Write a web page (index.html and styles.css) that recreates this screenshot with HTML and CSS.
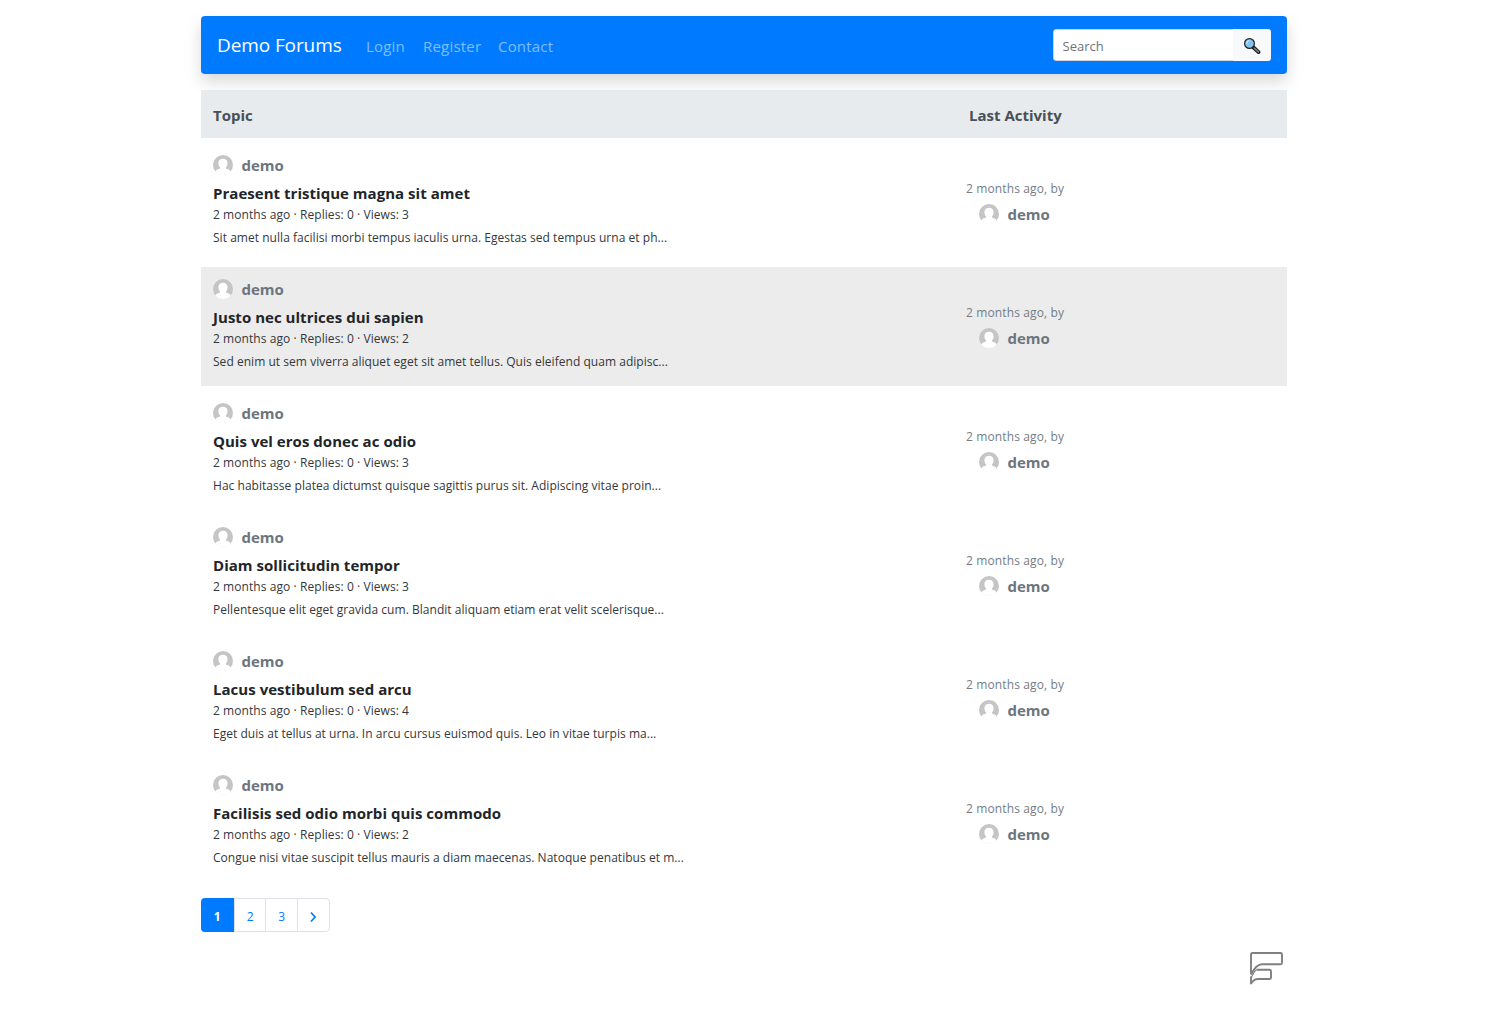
FILE: index.html
```
<!DOCTYPE html>
<html lang="en">
<head>
	<title>Demo Forums</title>
	<meta charset="UTF-8">
	<meta name="viewport" content="width=device-width, initial-scale=1.0">
	<link rel="stylesheet" href="styles.css">
</head>
<body>
	<svg class="defs" width="0" height="0">
		<symbol id="avatar" viewBox="0 0 20 20">
			<circle cx="10" cy="10" r="10" fill="#c5c5c5"/>
			<path d="M10 3.800c-3 0-4.600 1.900-4.600 4.500 0 1.900.8 3.400 1.700 4.300v.9c-2 .6-3.800 1.200-4.800 2.900A10 10 0 0 0 10 20a10 10 0 0 0 7.700-3.600c-1-1.700-2.800-2.300-4.800-2.900v-.9c.9-.9 1.700-2.400 1.700-4.300 0-2.600-1.600-4.500-4.600-4.500z" fill="#fff"/>
		</symbol>
	</svg>

	<div class="container">
		<nav class="navbar">
			<a class="brand" href="#">Demo Forums</a>
			<a class="nav-link login" href="#">Login</a>
			<a class="nav-link register" href="#">Register</a>
			<a class="nav-link contact" href="#">Contact</a>
			<form class="search">
				<input type="text" placeholder="Search">
				<button type="button" aria-label="Search">
					<svg width="18" height="18" viewBox="0 0 18 18">
						<path d="M10.500 10.500l5 4.600" stroke="#202020" stroke-width="3.800" stroke-linecap="round"/>
						<path d="M11.500 11.400l3.800 3.500" stroke="#788083" stroke-width="1.600" stroke-linecap="round"/>
						<circle cx="6.500" cy="6.500" r="4.900" fill="#83c3f0" stroke="#202020" stroke-width="1.200"/>
						<path d="M3.700 6.700a3 3 0 0 1 3-3" fill="none" stroke="#c4e4fa" stroke-width="1.300"/>
					</svg>
				</button>
			</form>
		</nav>

		<div class="thead">
			<div class="col-topic">Topic</div>
			<div class="col-last">Last Activity</div>
		</div>

		<div class="row">
			<div class="topic">
				<div class="user"><svg class="avatar"><use href="#avatar"/></svg>demo</div>
				<a class="title" href="#">Praesent tristique magna sit amet</a>
				<div class="meta">2 months ago · Replies: 0 · Views: 3</div>
				<p class="excerpt">Sit amet nulla facilisi morbi tempus iaculis urna. Egestas sed tempus urna et ph...</p>
			</div>
			<div class="last">
				<div class="ago">2 months ago, by</div>
				<div class="user"><svg class="avatar"><use href="#avatar"/></svg>demo</div>
			</div>
		</div>
		<div class="row active">
			<div class="topic">
				<div class="user"><svg class="avatar"><use href="#avatar"/></svg>demo</div>
				<a class="title" href="#">Justo nec ultrices dui sapien</a>
				<div class="meta">2 months ago · Replies: 0 · Views: 2</div>
				<p class="excerpt">Sed enim ut sem viverra aliquet eget sit amet tellus. Quis eleifend quam adipisc...</p>
			</div>
			<div class="last">
				<div class="ago">2 months ago, by</div>
				<div class="user"><svg class="avatar"><use href="#avatar"/></svg>demo</div>
			</div>
		</div>
		<div class="row">
			<div class="topic">
				<div class="user"><svg class="avatar"><use href="#avatar"/></svg>demo</div>
				<a class="title" href="#">Quis vel eros donec ac odio</a>
				<div class="meta">2 months ago · Replies: 0 · Views: 3</div>
				<p class="excerpt">Hac habitasse platea dictumst quisque sagittis purus sit. Adipiscing vitae proin...</p>
			</div>
			<div class="last">
				<div class="ago">2 months ago, by</div>
				<div class="user"><svg class="avatar"><use href="#avatar"/></svg>demo</div>
			</div>
		</div>
		<div class="row">
			<div class="topic">
				<div class="user"><svg class="avatar"><use href="#avatar"/></svg>demo</div>
				<a class="title" href="#">Diam sollicitudin tempor</a>
				<div class="meta">2 months ago · Replies: 0 · Views: 3</div>
				<p class="excerpt">Pellentesque elit eget gravida cum. Blandit aliquam etiam erat velit scelerisque...</p>
			</div>
			<div class="last">
				<div class="ago">2 months ago, by</div>
				<div class="user"><svg class="avatar"><use href="#avatar"/></svg>demo</div>
			</div>
		</div>
		<div class="row">
			<div class="topic">
				<div class="user"><svg class="avatar"><use href="#avatar"/></svg>demo</div>
				<a class="title" href="#">Lacus vestibulum sed arcu</a>
				<div class="meta">2 months ago · Replies: 0 · Views: 4</div>
				<p class="excerpt">Eget duis at tellus at urna. In arcu cursus euismod quis. Leo in vitae turpis ma...</p>
			</div>
			<div class="last">
				<div class="ago">2 months ago, by</div>
				<div class="user"><svg class="avatar"><use href="#avatar"/></svg>demo</div>
			</div>
		</div>
		<div class="row">
			<div class="topic">
				<div class="user"><svg class="avatar"><use href="#avatar"/></svg>demo</div>
				<a class="title" href="#">Facilisis sed odio morbi quis commodo</a>
				<div class="meta">2 months ago · Replies: 0 · Views: 2</div>
				<p class="excerpt">Congue nisi vitae suscipit tellus mauris a diam maecenas. Natoque penatibus et m...</p>
			</div>
			<div class="last">
				<div class="ago">2 months ago, by</div>
				<div class="user"><svg class="avatar"><use href="#avatar"/></svg>demo</div>
			</div>
		</div>

		<div class="pagination">
			<a class="current" href="#">1</a>
			<a href="#">2</a>
			<a href="#">3</a>
			<a href="#" aria-label="Next"><svg width="8" height="12" viewBox="0 0 8 12"><path d="M2 1.500l4 4.500-4 4.500" fill="none" stroke="#007bff" stroke-width="1.700"/></svg></a>
		</div>

		<footer>
			<svg width="36" height="34" viewBox="0 0 36 34" fill="none" stroke="#808080" stroke-width="1.900" stroke-linejoin="round">
				<path d="M2 23.500V3.500Q2 2 3.500 2H31.500Q33 2 33 3.500V11.700Q33 13.200 31.500 13.200H13C7.500 13.200 4.500 18.500 2 23.500"/>
				<path d="M7.500 18.700H20.500Q22 18.700 22 20.200V26.500Q22 28 20.500 28H9C5.500 28 4 29.500 2 32.500V25.500"/>
				<path d="M2 26.500C4 24.500 4.500 20.500 7.500 18.700" stroke-width="1.200"/>
			</svg>
		</footer>
	</div>
</body>
</html>
```
FILE: styles.css
```
*{
	box-sizing: border-box;
	margin: 0;
	padding: 0;
}
body{
	background: #fff;
	color: #212529;
	font: 15px/24px "Open Sans", "Noto Sans", sans-serif;
}
a{
	color: inherit;
	text-decoration: none;
}
.defs{
	display: block;
}
.container{
	width: 1086px;
	margin: 0 auto;
	padding-top: 16px;
}
.navbar{
	display: flex;
	align-items: center;
	height: 58px;
	padding: 0 16px 0 16.5px;
	border-radius: 4px;
	background: #007bff;
	box-shadow: 0 8px 16px rgba(0,0,0,.15);
	color: #fff;
}
.brand{
	width: 149px;
	font-size: 19px;
	letter-spacing: -.1px;
}
.nav-link{
	padding-top: 1px;
	color: rgba(255,255,255,.5);
	letter-spacing: .2px;
}
.login{
	width: 57px;
}
.register{
	width: 75px;
}
.search{
	display: flex;
	width: 218px;
	height: 32px;
	margin-left: auto;
	border-radius: 3px;
	overflow: hidden;
}
.search input{
	flex: 1;
	min-width: 0;
	padding: 2px 9px 0;
	border: 1px solid #ced4da;
	border-right: 0;
	border-radius: 3px 0 0 3px;
	font: 13px "Open Sans", sans-serif;
}
.search input::placeholder{
	color: #6c757d;
}
.search button{
	display: flex;
	align-items: center;
	justify-content: center;
	width: 38px;
	padding-top: 1px;
	border: 0;
	background: #f8f9fa;
}
.thead{
	display: flex;
	height: 48px;
	margin-top: 16px;
	padding: 0 12.5px;
	background: rgba(226,230,234,.8);
	color: #495057;
	font-weight: 700;
	line-height: 50px;
}
.col-topic{
	width: 756px;
}
.row{
	display: flex;
	height: 119px;
	margin-top: 5px;
	padding: 11px 12.5px 0;
}
.active{
	background: #ececec;
}
.topic{
	width: 753px;
}
.user{
	display: flex;
	height: 24px;
	color: #6c757d;
	font-weight: 700;
	line-height: 22px;
}
.avatar{
	width: 20px;
	height: 20px;
	margin: .5px 8.5px 0 0;
}
.title{
	display: block;
	margin-top: 3px;
	font-weight: 700;
	line-height: 24px;
	letter-spacing: .03px;
}
.meta, .excerpt, .ago{
	color: #33373b;
	font-size: 12px;
	line-height: 20px;
}
.meta{
	letter-spacing: .07px;
}
.excerpt{
	margin-top: 3px;
	letter-spacing: .035px;
}
.last{
	padding-top: 25px;
}
.last .ago{
	color: #747d85;
	letter-spacing: .12px;
}
.last .user{
	margin-top: 4px;
	padding-left: 13px;
}
.pagination{
	display: flex;
	width: 129px;
	height: 34px;
	margin-top: 16px;
	border: 1px solid #dee2e6;
	border-radius: 4px;
	color: #007bff;
	font-size: 12px;
}
.pagination a{
	display: flex;
	align-items: center;
	justify-content: center;
	width: 32px;
	padding-top: 3px;
	border-left: 1px solid #dee2e6;
}
.pagination .current{
	width: 34px;
	margin: -1px 0 -1px -1px;
	border: 0;
	border-radius: 4px 0 0 4px;
	background: #007bff;
	color: #fff;
	font-weight: 700;
}
footer{
	display: flex;
	justify-content: flex-end;
	margin-top: 19px;
	padding-right: 2px;
}
```
